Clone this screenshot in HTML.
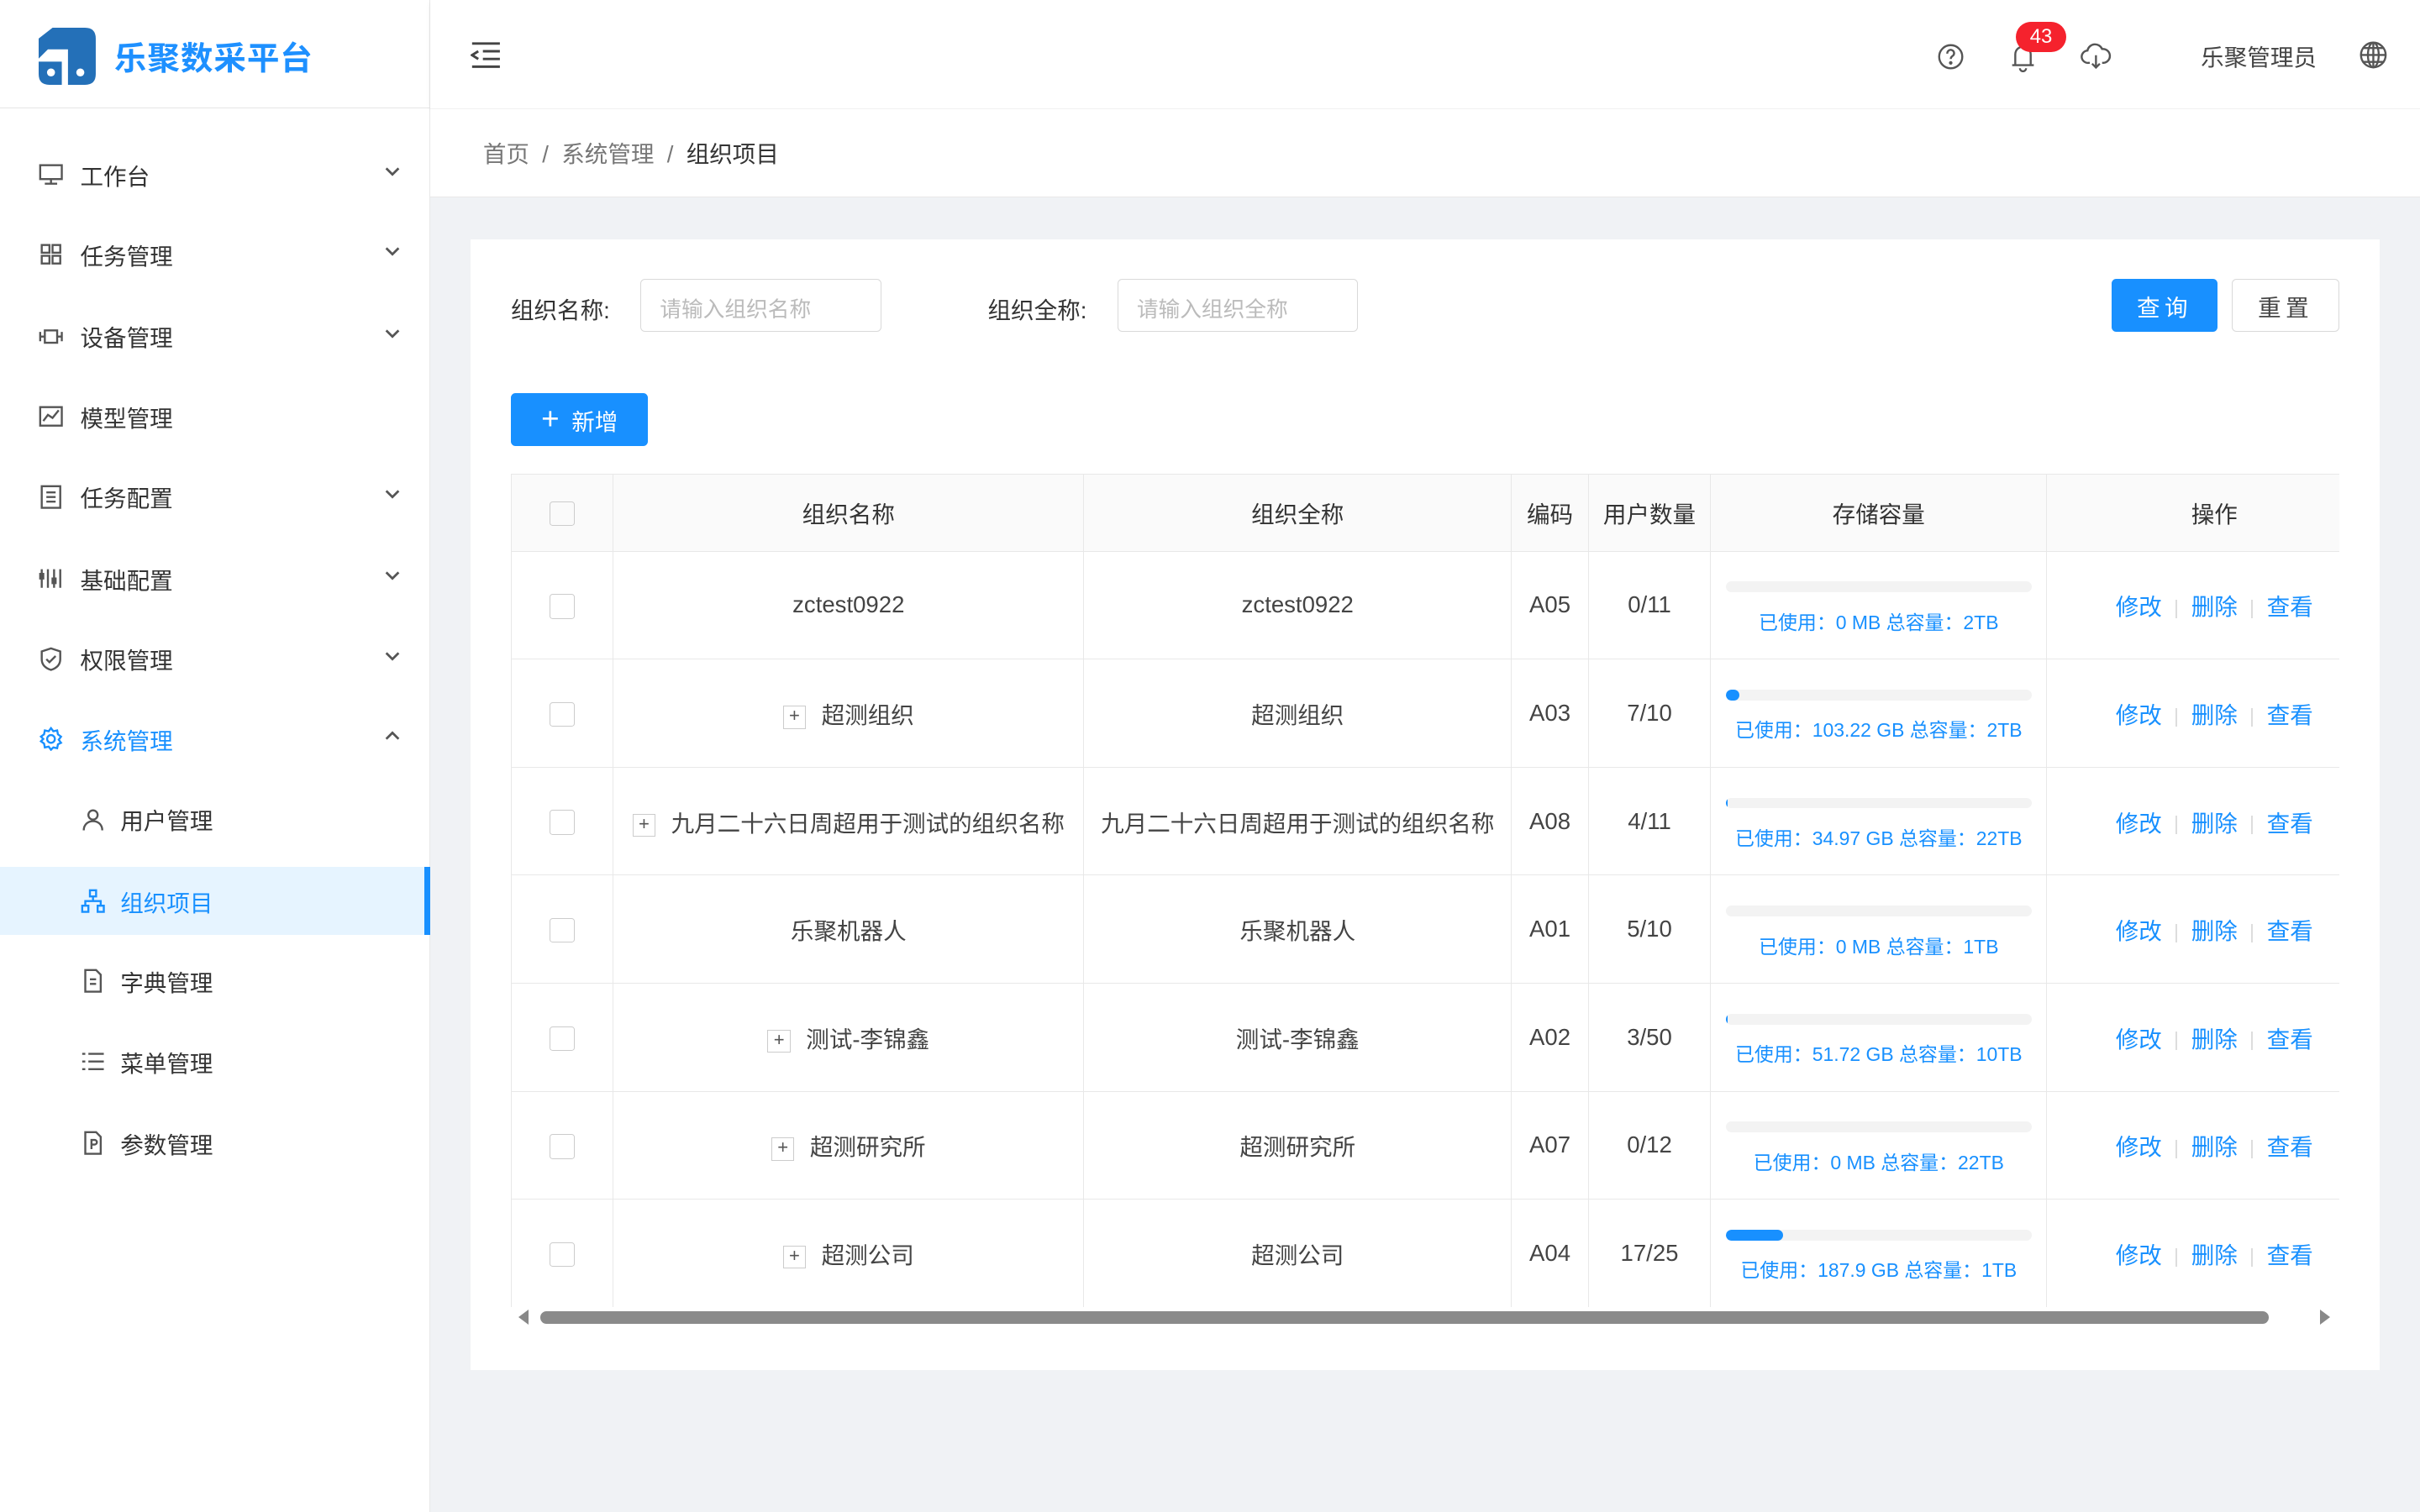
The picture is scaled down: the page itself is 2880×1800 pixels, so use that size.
<!DOCTYPE html>
<html><head><meta charset="utf-8">
<style>
*{box-sizing:border-box;margin:0;padding:0}
html,body{width:2880px;height:1800px;overflow:hidden;background:#f0f2f5}
#w{zoom:1.836735;width:1568px;height:980px;position:relative;font-family:"Liberation Sans","Noto Sans CJK SC",sans-serif;color:#333;font-size:15px}
.abs{position:absolute}
#side{left:0;top:0;width:279px;height:980px;background:#fff;border-right:1px solid #e8e8e8}
#logo{left:0;top:0;width:279px;height:70px;border-bottom:1px solid #e5e5e5}
.mi{position:absolute;left:0;width:279px;height:44px;display:flex;align-items:center;color:#333;font-size:15px}
.mi svg{position:absolute;left:25px}
.mi .t{position:absolute;left:52px}
.mi.sub svg{left:52px}.mi.sub .t{left:78px}
.mi .ar{position:absolute;left:248px;top:14px}
#top{left:279px;top:0;width:1289px;height:70px;background:#fff;box-shadow:0 1px 3px rgba(0,0,0,.06)}
#bc{left:279px;top:70px;width:1289px;height:58px;background:#fff;border-top:1px solid #f0f0f0;border-bottom:1px solid #e8e8e8;font-size:15px;color:#777;padding:17px 0 0 34px}
#card{left:305px;top:155px;width:1237px;height:733px;background:#fff}
.inp{position:absolute;width:156px;height:34px;border:1px solid #d9d9d9;border-radius:3px;color:#bbb;font-size:14px;padding:8px 12px}
.lab{position:absolute;font-size:15px;color:#333}
.btn{position:absolute;height:34px;border-radius:3px;font-size:15px;display:flex;align-items:center;justify-content:center}
#tw{position:absolute;left:331px;top:307px;width:1185px;height:540px;overflow:hidden}
table{position:absolute;left:0;top:0;border-collapse:collapse;font-size:15px;table-layout:fixed;width:1402px}
td,th{border:1px solid #e8e8e8;text-align:center;height:70px;color:#444;font-weight:normal}
th{height:50px;background:#fafafa;color:#333}
.cb{display:inline-block;width:16px;height:16px;border:1px solid #ccc;border-radius:2px;vertical-align:middle}
.pl{display:inline-block;width:15px;height:15px;border:1px solid #ccc;font-size:12px;line-height:12px;margin-right:10px;vertical-align:middle;color:#555}
.bar{width:198px;height:7px;background:#f3f3f3;border-radius:4px;margin:4px auto 9px;position:relative;overflow:hidden}
.bar i{position:absolute;left:0;top:0;height:7px;background:#1890ff;border-radius:4px}
.st{color:#1890ff;font-size:12.5px}
.op{color:#1890ff;font-size:15px}
.op b{display:inline-block;width:1px;height:12px;background:#ddd;margin:0 9px;vertical-align:middle}
</style></head><body><div id="w">
<div id="side" class="abs">
 <div id="logo" class="abs">
  <svg class="abs" style="left:25px;top:18px" width="37" height="37" viewBox="0 0 37 37"><path d="M9 0H30Q37 0 37 7V30Q37 37 30 37H19V14H6L0 20V7Z" fill="#2470b8"/><path d="M0 22H15V37H7Q0 37 0 30Z" fill="#2470b8"/><circle cx="8" cy="29" r="2.6" fill="#fff"/><circle cx="27" cy="29" r="2.6" fill="#fff"/></svg>
  <div class="abs" style="left:74px;top:21px;font-size:21px;font-weight:bold;color:#1e90ff;letter-spacing:0.5px">乐聚数采平台</div>
 </div>
 <div class="mi" style="top:91px"><svg width="16" height="16" viewBox="0 0 16 16" fill="none" stroke="#555" stroke-width="1.3"><rect x="1" y="2" width="14" height="9"/><path d="M8 11v3M4 14h8"/></svg><span class="t">工作台</span><svg class="ar" width="12" height="12" viewBox="0 0 12 12"><path d="M2 4l4 4 4-4" stroke="#555" stroke-width="1.5" fill="none"/></svg></div>
 <div class="mi" style="top:143px"><svg width="16" height="16" viewBox="0 0 16 16" fill="none" stroke="#555" stroke-width="1.3"><rect x="2" y="2" width="5" height="5"/><rect x="9" y="2" width="5" height="5"/><rect x="2" y="9" width="5" height="5"/><rect x="9" y="9" width="5" height="5"/></svg><span class="t">任务管理</span><svg class="ar" width="12" height="12" viewBox="0 0 12 12"><path d="M2 4l4 4 4-4" stroke="#555" stroke-width="1.5" fill="none"/></svg></div>
 <div class="mi" style="top:196px"><svg width="16" height="16" viewBox="0 0 16 16" fill="none" stroke="#555" stroke-width="1.3"><rect x="4" y="4" width="8" height="8"/><path d="M1 5v6M15 5v6M1 8h3M12 8h3"/></svg><span class="t">设备管理</span><svg class="ar" width="12" height="12" viewBox="0 0 12 12"><path d="M2 4l4 4 4-4" stroke="#555" stroke-width="1.5" fill="none"/></svg></div>
 <div class="mi" style="top:248px"><svg width="16" height="16" viewBox="0 0 16 16" fill="none" stroke="#555" stroke-width="1.3"><rect x="1" y="2" width="14" height="12"/><path d="M3 11l3-4 3 2 4-5"/></svg><span class="t">模型管理</span></div>
 <div class="mi" style="top:300px"><svg width="16" height="16" viewBox="0 0 16 16" fill="none" stroke="#555" stroke-width="1.3"><rect x="2" y="1" width="12" height="14"/><path d="M5 5h6M5 8h6M5 11h6"/></svg><span class="t">任务配置</span><svg class="ar" width="12" height="12" viewBox="0 0 12 12"><path d="M2 4l4 4 4-4" stroke="#555" stroke-width="1.5" fill="none"/></svg></div>
 <div class="mi" style="top:353px"><svg width="16" height="16" viewBox="0 0 16 16" fill="none" stroke="#555" stroke-width="1.3"><path d="M2 2v12M6 2v12M10 2v12M14 2v12"/><rect x="1" y="5" width="2" height="3"/><rect x="9" y="8" width="2" height="3"/></svg><span class="t">基础配置</span><svg class="ar" width="12" height="12" viewBox="0 0 12 12"><path d="M2 4l4 4 4-4" stroke="#555" stroke-width="1.5" fill="none"/></svg></div>
 <div class="mi" style="top:405px"><svg width="16" height="16" viewBox="0 0 16 16" fill="none" stroke="#555" stroke-width="1.3"><path d="M8 1l6 2v5c0 4-3 6-6 7-3-1-6-3-6-7V3z"/><path d="M5 8l2 2 4-4"/></svg><span class="t">权限管理</span><svg class="ar" width="12" height="12" viewBox="0 0 12 12"><path d="M2 4l4 4 4-4" stroke="#555" stroke-width="1.5" fill="none"/></svg></div>
 <div class="mi" style="top:457px;color:#1890ff"><svg width="16" height="16" viewBox="0 0 16 16" fill="none" stroke="#1890ff" stroke-width="1.3"><circle cx="8" cy="8" r="2.5"/><path d="M8 1l1.5 2 2.5-.5.5 2.5 2 1.5-1.5 2 1.5 2-2 1-.5 2.5-2.5-.5L8 15l-1.5-2-2.5.5-.5-2.5-2-1.5L3 8 1.5 6.5l2-1.5L4 2.5l2.5.5z"/></svg><span class="t">系统管理</span><svg class="ar" width="12" height="12" viewBox="0 0 12 12"><path d="M2 8l4-4 4 4" stroke="#555" stroke-width="1.5" fill="none"/></svg></div>
 <div class="mi sub" style="top:509px"><svg width="16" height="16" viewBox="0 0 16 16" fill="none" stroke="#555" stroke-width="1.3"><circle cx="8" cy="5" r="3"/><path d="M2 15c0-4 3-6 6-6s6 2 6 6"/></svg><span class="t">用户管理</span></div>
 <div class="mi sub" style="top:562px;background:#e6f4ff;color:#1890ff"><svg width="16" height="16" viewBox="0 0 16 16" fill="none" stroke="#1890ff" stroke-width="1.3"><rect x="6" y="1" width="4" height="4"/><rect x="1" y="11" width="4" height="4"/><rect x="11" y="11" width="4" height="4"/><path d="M8 5v3M3 11V8h10v3"/></svg><span class="t">组织项目</span><div class="abs" style="left:275px;top:0;width:4px;height:44px;background:#1890ff"></div></div>
 <div class="mi sub" style="top:614px"><svg width="16" height="16" viewBox="0 0 16 16" fill="none" stroke="#555" stroke-width="1.3"><path d="M3 1h7l3 3v11H3z"/><path d="M6 7h4M6 10h4"/></svg><span class="t">字典管理</span></div>
 <div class="mi sub" style="top:666px"><svg width="16" height="16" viewBox="0 0 16 16" fill="none" stroke="#555" stroke-width="1.3"><path d="M1 3h2M5 3h10M1 8h2M5 8h10M1 13h2M5 13h10"/></svg><span class="t">菜单管理</span></div>
 <div class="mi sub" style="top:719px"><svg width="16" height="16" viewBox="0 0 16 16" fill="none" stroke="#555" stroke-width="1.3"><path d="M3 1h7l3 3v11H3z"/><path d="M7 12V6h2a1.5 1.5 0 010 3H7"/></svg><span class="t">参数管理</span></div>
</div>
<div id="top" class="abs">
 <svg class="abs" style="left:26px;top:27px" width="20" height="17" viewBox="0 0 20 17" fill="none" stroke="#444" stroke-width="1.6"><path d="M1 1h18M8 6h11M8 11h11M1 16h18M5 6L1 8.5 5 11"/></svg>
 <svg class="abs" style="left:976px;top:28px" width="18" height="18" viewBox="0 0 18 18" fill="none" stroke="#555" stroke-width="1.3"><circle cx="9" cy="9" r="7.5"/><path d="M6.8 7a2.2 2.2 0 114 1c-1 .8-1.8 1.2-1.8 2.5"/><circle cx="9" cy="13" r=".5" fill="#555"/></svg>
 <svg class="abs" style="left:1023px;top:27px" width="18" height="20" viewBox="0 0 18 20" fill="none" stroke="#555" stroke-width="1.3"><path d="M4 15V8a5 5 0 0110 0v7M2 15h14M7 17a2 2 0 004 0"/></svg>
 <div class="abs" style="left:1027px;top:14px;width:33px;height:20px;border-radius:10px;background:#f5222d;color:#fff;font-size:13px;text-align:center;line-height:20px">43</div>
 <svg class="abs" style="left:1069px;top:28px" width="20" height="18" viewBox="0 0 20 18" fill="none" stroke="#555" stroke-width="1.3"><path d="M6 13H5a4 4 0 01-.5-8A5 5 0 0114 4a4 4 0 011 9h-1M10 8v8M7.5 13.5L10 16l2.5-2.5"/></svg>
 <div class="abs" style="left:1147px;top:25px;font-size:15px;color:#444">乐聚管理员</div>
 <svg class="abs" style="left:1249px;top:26px" width="19" height="19" viewBox="0 0 19 19" fill="none" stroke="#555" stroke-width="1.3"><circle cx="9.5" cy="9.5" r="8"/><ellipse cx="9.5" cy="9.5" rx="3.5" ry="8"/><path d="M1.5 9.5h16M3 5h13M3 14h13M9.5 1.5v16"/></svg>
</div>
<div id="bc" class="abs">首页 &nbsp;/&nbsp; 系统管理 &nbsp;/&nbsp; <span style="color:#333">组织项目</span></div>
<div id="card" class="abs"></div>
<div class="lab" style="left:331px;top:189px">组织名称:</div>
<div class="inp" style="left:415px;top:181px">请输入组织名称</div>
<div class="lab" style="left:640px;top:189px">组织全称:</div>
<div class="inp" style="left:724px;top:181px">请输入组织全称</div>
<div class="btn" style="left:1368px;top:181px;width:69px;background:#1890ff;color:#fff;letter-spacing:3px">查询</div>
<div class="btn" style="left:1446px;top:181px;width:70px;border:1px solid #d9d9d9;color:#444;letter-spacing:3px">重置</div>
<div class="btn" style="left:331px;top:255px;width:89px;background:#1890ff;color:#fff"><span style="font-size:20px;margin-right:8px;line-height:1">+</span>新增</div>
<div id="tw">
<table>
<colgroup><col style="width:66px"><col style="width:305px"><col style="width:277px"><col style="width:50px"><col style="width:79px"><col style="width:218px"><col style="width:217px"><col></colgroup>
<tr><th><span class="cb"></span></th><th>组织名称</th><th>组织全称</th><th>编码</th><th>用户数量</th><th>存储容量</th><th>操作</th><th></th></tr>
<tr><td><span class="cb"></span></td><td>zctest0922</td><td>zctest0922</td><td>A05</td><td>0/11</td><td><div class="bar"></div><div class="st">已使用：0 MB 总容量：2TB</div></td><td class="op">修改<b></b>删除<b></b>查看</td><td></td></tr>
<tr><td><span class="cb"></span></td><td><span class="pl">+</span>超测组织</td><td>超测组织</td><td>A03</td><td>7/10</td><td><div class="bar"><i style="width:9px"></i></div><div class="st">已使用：103.22 GB 总容量：2TB</div></td><td class="op">修改<b></b>删除<b></b>查看</td><td></td></tr>
<tr><td><span class="cb"></span></td><td><span class="pl">+</span>九月二十六日周超用于测试的组织名称</td><td>九月二十六日周超用于测试的组织名称</td><td>A08</td><td>4/11</td><td><div class="bar"><i style="width:1px"></i></div><div class="st">已使用：34.97 GB 总容量：22TB</div></td><td class="op">修改<b></b>删除<b></b>查看</td><td></td></tr>
<tr><td><span class="cb"></span></td><td>乐聚机器人</td><td>乐聚机器人</td><td>A01</td><td>5/10</td><td><div class="bar"></div><div class="st">已使用：0 MB 总容量：1TB</div></td><td class="op">修改<b></b>删除<b></b>查看</td><td></td></tr>
<tr><td><span class="cb"></span></td><td><span class="pl">+</span>测试-李锦鑫</td><td>测试-李锦鑫</td><td>A02</td><td>3/50</td><td><div class="bar"><i style="width:1px"></i></div><div class="st">已使用：51.72 GB 总容量：10TB</div></td><td class="op">修改<b></b>删除<b></b>查看</td><td></td></tr>
<tr><td><span class="cb"></span></td><td><span class="pl">+</span>超测研究所</td><td>超测研究所</td><td>A07</td><td>0/12</td><td><div class="bar"></div><div class="st">已使用：0 MB 总容量：22TB</div></td><td class="op">修改<b></b>删除<b></b>查看</td><td></td></tr>
<tr><td><span class="cb"></span></td><td><span class="pl">+</span>超测公司</td><td>超测公司</td><td>A04</td><td>17/25</td><td><div class="bar"><i style="width:37px"></i></div><div class="st">已使用：187.9 GB 总容量：1TB</div></td><td class="op">修改<b></b>删除<b></b>查看</td><td></td></tr>
</table>
</div>
<div class="abs" style="left:336px;top:849px;width:0;height:0;border-top:5px solid transparent;border-bottom:5px solid transparent;border-right:7px solid #888"></div>
<div class="abs" style="left:350px;top:850px;width:1120px;height:8px;background:#8a8a8a;border-radius:4px"></div>
<div class="abs" style="left:1503px;top:849px;width:0;height:0;border-top:5px solid transparent;border-bottom:5px solid transparent;border-left:7px solid #888"></div>
</div></body></html>
